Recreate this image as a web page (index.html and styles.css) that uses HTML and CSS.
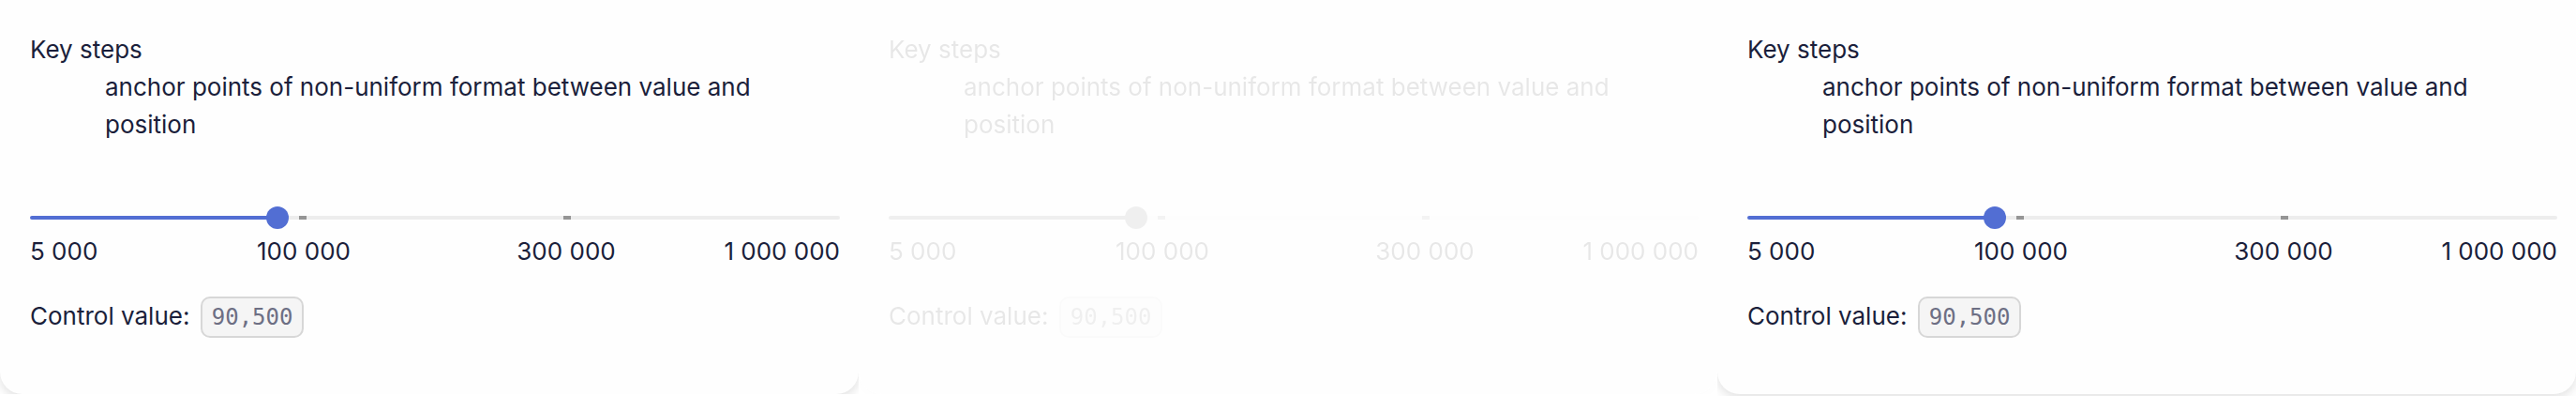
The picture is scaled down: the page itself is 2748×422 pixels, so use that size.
FILE: index.html
```
<!DOCTYPE html>
<html lang="en">
<head>
<meta charset="utf-8">
<title>Slider key steps</title>
<link rel="stylesheet" href="styles.css">
</head>
<body>
<main class="board">
  <section class="frame">
    <div class="card">
      <dl class="about">
        <dt>Key steps</dt>
        <dd>anchor points of non-uniform format between value and position</dd>
      </dl>
      <div class="slider">
        <input class="range" type="range" id="amount-a" min="0" max="100" step="any" value="30" aria-label="Amount">
        <div class="ticks"><span class="tick"></span><span class="tick"></span></div>
      </div>
      <div class="labels"><span>5 000</span><span>100 000</span><span>300 000</span><span>1 000 000</span></div>
      <p class="value">Control value: <output class="code" for="amount-a">90,500</output></p>
    </div>
  </section>
  <section class="frame faded">
    <div class="card">
      <dl class="about">
        <dt>Key steps</dt>
        <dd>anchor points of non-uniform format between value and position</dd>
      </dl>
      <div class="slider">
        <input class="range" type="range" id="amount-b" min="0" max="100" step="any" value="30" aria-label="Amount">
        <div class="ticks"><span class="tick"></span><span class="tick"></span></div>
      </div>
      <div class="labels"><span>5 000</span><span>100 000</span><span>300 000</span><span>1 000 000</span></div>
      <p class="value">Control value: <output class="code" for="amount-b">90,500</output></p>
    </div>
  </section>
  <section class="frame frame-last">
    <div class="card">
      <dl class="about">
        <dt>Key steps</dt>
        <dd>anchor points of non-uniform format between value and position</dd>
      </dl>
      <div class="slider">
        <input class="range" type="range" id="amount-c" min="0" max="100" step="any" value="30" aria-label="Amount">
        <div class="ticks"><span class="tick"></span><span class="tick"></span></div>
      </div>
      <div class="labels"><span>5 000</span><span>100 000</span><span>300 000</span><span>1 000 000</span></div>
      <p class="value">Control value: <output class="code" for="amount-c">90,500</output></p>
    </div>
  </section>
</main>
</body>
</html>
```
FILE: styles.css
```
* { box-sizing: border-box; }

body {
  margin: 0;
  background: #fff;
  color: #1b1f3b;
  font: 26px/40px Inter, "Open Sans", sans-serif;
}

.board {
  display: grid;
  grid-template-columns: repeat(3, 1fr);
  align-items: start;
}

.frame { overflow: hidden; }

.frame-last { padding-bottom: 2px; }

.faded {
  filter: grayscale(1);
  opacity: 0.1;
}

.card {
  padding: 33px 20px 60px 32px;
  border-radius: 0 0 24px 24px;
  background: #fefefe;
  box-shadow: 0 4px 12px rgba(0, 0, 0, 0.12);
}

.about { margin: 0; }

.about dd { margin: 0 60px 0 80px; }

.slider {
  position: relative;
  display: flex;
  margin-top: 67px;
}

.range {
  appearance: none;
  width: 100%;
  height: 24px;
  margin: 0;
  background: none;
}

.range::-webkit-slider-runnable-track {
  height: 4px;
  border-radius: 2px;
  background: linear-gradient(to right, #526ed3 30.5%, #ededed 30.5%);
}

.range::-webkit-slider-thumb {
  appearance: none;
  width: 24px;
  height: 24px;
  margin-top: -10px;
  border-radius: 50%;
  background: #526ed3;
}

/* Shares the thumb's travel, which stops half a thumb short of each end */
.ticks {
  position: absolute;
  inset: 10px 12px;
  display: flex;
  justify-content: space-evenly;
  pointer-events: none;
}

.tick {
  width: 8px;
  height: 4px;
  background: #959595;
}

.labels {
  display: grid;
  grid-template-columns: 1fr 2fr 2fr 1fr;
  margin-top: 4px;
  padding: 0 12px;
  text-align: center;
  white-space: nowrap;
}

.labels span:first-child {
  margin-left: -12px;
  text-align: left;
}

.labels span:last-child {
  margin-right: -12px;
  text-align: right;
}

.value { margin: 28px 0 0; }

.code {
  display: inline-block;
  padding: 0 10px;
  margin-left: 4px;
  border: 2px solid #d7d7d7;
  border-radius: 10px;
  background: #f5f5f5;
  color: #6d6f84;
  font: 24px/40px "DejaVu Sans Mono", monospace;
}
```
